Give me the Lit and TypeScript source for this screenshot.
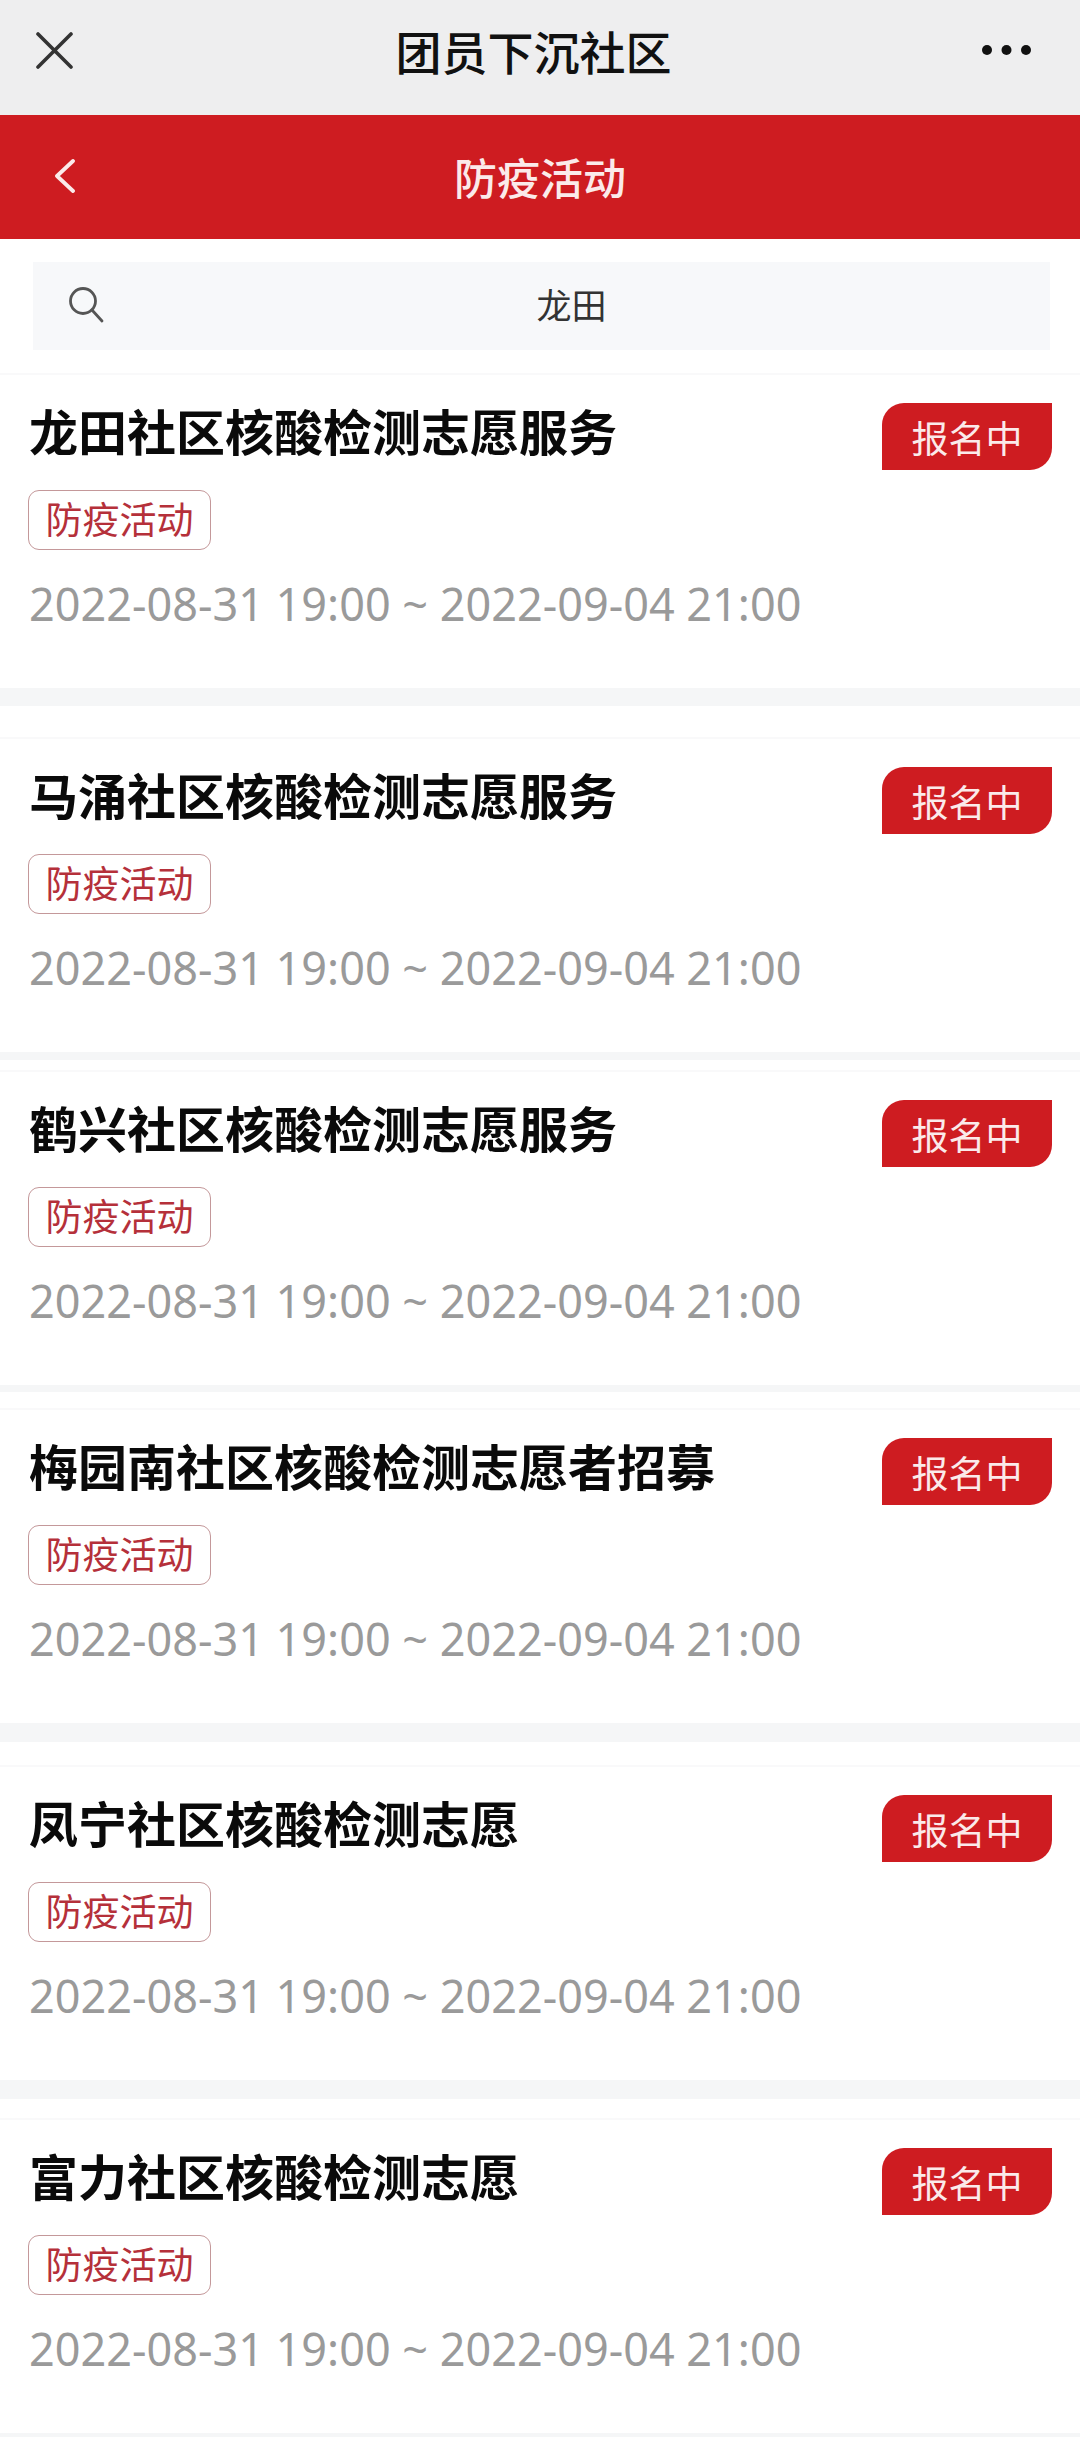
import { LitElement, html, css } from "lit";
import { customElement } from "lit/decorators.js";

const DATE = "2022-08-31 19:00 ~ 2022-09-04 21:00";
/* gap: space after a card; band: the grey part of that space */
const items = [
  { t: "龙田社区核酸检测志愿服务", gap: 49, band: 18 },
  { t: "马涌社区核酸检测志愿服务", gap: 18, band: 8 },
  { t: "鹤兴社区核酸检测志愿服务", gap: 23, band: 7 },
  { t: "梅园南社区核酸检测志愿者招募", gap: 42, band: 19 },
  { t: "凤宁社区核酸检测志愿", gap: 38, band: 19 },
  { t: "富力社区核酸检测志愿", gap: 4, band: 4 },
];

@customElement("app-root")
export class AppRoot extends LitElement {
  static styles = css`
    :host { display: block; width: 1080px; height: 2437px; overflow: hidden; background: #fff;
      font-family: "Noto Sans CJK SC", "Noto Sans", sans-serif; }
    .nav { height: 115px; background: #eeeeef; display: flex; align-items: center; justify-content: space-between; padding: 0 49px 15px 36px; box-sizing: border-box; }
    .nav h1 { margin: 0 0 0 12px; font-size: 46px; font-weight: 500; color: #111; line-height: 1; }
    .red { height: 124px; background: #ce1c21; display: grid; grid-template-columns: 1fr auto 1fr; align-items: center; color: #fbeaea; font-size: 43px; font-weight: 500; padding: 0 55px 2px; box-sizing: border-box; }
    .search { margin: 23px 30px 0 33px; height: 88px; background: #f7f8fa; display: flex; align-items: center; position: relative; justify-content: center; padding: 0 0 6px 60px; box-sizing: border-box; font-size: 35px; color: #333; }
    .search svg { position: absolute; left: 35px; top: 25px; }
    .list { padding-top: 23px; }
    .card { position: relative; height: 315px; padding: 22px 28px 0 29px; box-sizing: border-box; border-top: 2px solid #f9f9fa; }
    .title { font-size: 49px; font-weight: 700; color: #0a0a0a; line-height: 66px; }
    .tag { display: block; margin: 27px 0 0 -1px; width: 183px; height: 60px; box-sizing: border-box; border: 1.5px solid #c4989a; border-radius: 11px; color: #b5303a; font-size: 37px; line-height: 55px; text-align: center; }
    .date { margin-top: 25px; font-size: 45px; color: #9a9a9a; line-height: 58px; font-family: "Noto Sans", sans-serif; white-space: nowrap; }
    .badge { position: absolute; right: 28px; top: 28px; width: 170px; height: 67px; background: #ce1c21; color: #fbeaea; font-size: 37px; border-radius: 22px 0 22px 0; display: flex; align-items: center; justify-content: center; }
    .band { background: #f5f6f7; }
  `;
  render() {
    return html`
      <div class="nav">
        <svg width="37" height="37" viewBox="0 0 37 37"><path d="M2 2 L35 35 M35 2 L2 35" stroke="#333" stroke-width="3.6" stroke-linecap="round"/></svg>
        <h1>团员下沉社区</h1>
        <svg width="49" height="12" viewBox="0 0 49 12"><circle cx="5" cy="6" r="5" fill="#111"/><circle cx="24.5" cy="6" r="5" fill="#111"/><circle cx="44" cy="6" r="5" fill="#111"/></svg>
      </div>
      <div class="red">
        <svg width="20" height="34" viewBox="0 0 20 34"><path d="M18 2 L2 17 L18 32" fill="none" stroke="#fbeaea" stroke-width="3.8" stroke-linecap="round" stroke-linejoin="round"/></svg>
        <span>防疫活动</span><span></span>
      </div>
      <div class="search">
        <svg width="36" height="36" viewBox="0 0 36 36"><circle cx="15" cy="14" r="12.5" fill="none" stroke="#555" stroke-width="2.8"/><path d="M24 23 L34 34" stroke="#555" stroke-width="2.8" stroke-linecap="round"/></svg>
        <span>龙田</span>
      </div>
      <div class="list">
        ${items.map((it) => html`
          <div class="card">
            <div class="title">${it.t}</div>
            <div class="tag">防疫活动</div>
            <div class="date">${DATE}</div>
            <div class="badge">报名中</div>
          </div>
          <div style="height:${it.gap}px"><div class="band" style="height:${it.band}px"></div></div>
        `)}
      </div>
    `;
  }
}
